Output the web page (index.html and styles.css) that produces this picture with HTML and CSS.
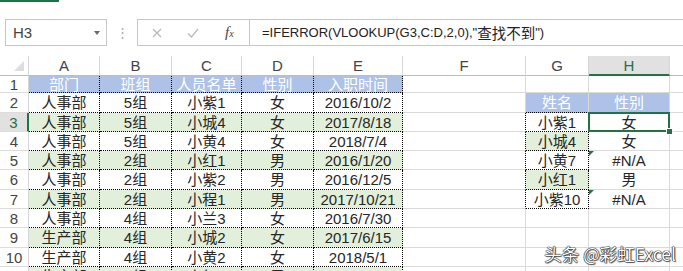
FILE: index.html
```html
<!DOCTYPE html>
<html lang="zh">
<head>
  <meta charset="UTF-8">
  <title>VLOOKUP 查找</title>
  <link rel="stylesheet" href="styles.css">
</head>
<body>
  <div class="app">
    <div class="brand-strip"></div>

    <!-- 名称框 + 编辑栏 -->
    <div class="formula-row">
      <div class="name-box">H3<span class="caret"></span></div>
      <div class="grip">⋮</div>
      <div class="fx-box">
        <div class="fx-btns">
          <svg class="ico-x" width="10" height="10" viewBox="0 0 10 10"><path d="M1 1L9 9M9 1L1 9" stroke="#b9b9b9" stroke-width="1.2" fill="none"/></svg>
          <svg class="ico-ok" width="12" height="10" viewBox="0 0 12 10"><path d="M1 5.5L4.5 9L11 1" stroke="#b9b9b9" stroke-width="1.2" fill="none"/></svg>
          <span class="ico-fx">f<small>x</small></span>
        </div>
        <div class="fx-text">=IFERROR(VLOOKUP(G3,C:D,2,0),"<span class="cjk">查找不到</span>")</div>
      </div>
    </div>

    <!-- 工作表 -->
    <div class="sheet">
      <div class="corner"></div>
      <div class="hd">A</div><div class="hd">B</div><div class="hd">C</div><div class="hd">D</div><div class="hd">E</div><div class="hd">F</div><div class="hd">G</div><div class="hd sel">H</div><div class="hd"></div>

      <div class="rh">1</div>
      <div class="c t th">部门</div><div class="c t th">班组</div><div class="c t th">人员名单</div><div class="c t th">性别</div><div class="c t th">入职时间</div>
      <div class="c"></div><div class="c"></div><div class="c"></div><div class="c"></div>

      <div class="rh">2</div>
      <div class="c t">人事部</div><div class="c t">5组</div><div class="c t">小紫1</div><div class="c t">女</div><div class="c t">2016/10/2</div>
      <div class="c"></div><div class="c th db">姓名</div><div class="c th">性别</div><div class="c"></div>

      <div class="rh sel">3</div>
      <div class="c t g">人事部</div><div class="c t g">5组</div><div class="c t g">小城4</div><div class="c t g">女</div><div class="c t g">2017/8/18</div>
      <div class="c dr"></div><div class="c t">小紫1</div><div class="c cur">女</div><div class="c"></div>

      <div class="rh">4</div>
      <div class="c t">人事部</div><div class="c t">5组</div><div class="c t">小黄4</div><div class="c t">女</div><div class="c t">2018/7/4</div>
      <div class="c dr"></div><div class="c t g">小城4</div><div class="c">女</div><div class="c"></div>

      <div class="rh">5</div>
      <div class="c t g">人事部</div><div class="c t g">2组</div><div class="c t g">小红1</div><div class="c t g">男</div><div class="c t g">2016/1/20</div>
      <div class="c dr"></div><div class="c t">小黄7</div><div class="c err">#N/A</div><div class="c"></div>

      <div class="rh">6</div>
      <div class="c t">人事部</div><div class="c t">2组</div><div class="c t">小紫2</div><div class="c t">男</div><div class="c t">2016/12/5</div>
      <div class="c dr"></div><div class="c t g">小红1</div><div class="c">男</div><div class="c"></div>

      <div class="rh">7</div>
      <div class="c t g">人事部</div><div class="c t g">2组</div><div class="c t g">小程1</div><div class="c t g">男</div><div class="c t g">2017/10/21</div>
      <div class="c dr"></div><div class="c t">小紫10</div><div class="c err">#N/A</div><div class="c"></div>

      <div class="rh">8</div>
      <div class="c t">人事部</div><div class="c t">4组</div><div class="c t">小兰3</div><div class="c t">女</div><div class="c t">2016/7/30</div>
      <div class="c"></div><div class="c"></div><div class="c"></div><div class="c"></div>

      <div class="rh">9</div>
      <div class="c t g">生产部</div><div class="c t g">4组</div><div class="c t g">小城2</div><div class="c t g">女</div><div class="c t g">2017/6/15</div>
      <div class="c"></div><div class="c"></div><div class="c"></div><div class="c"></div>

      <div class="rh">10</div>
      <div class="c t">生产部</div><div class="c t">4组</div><div class="c t">小黄2</div><div class="c t">女</div><div class="c t">2018/5/1</div>
      <div class="c"></div><div class="c"></div><div class="c"></div><div class="c"></div>

      <div class="rh">11</div>
      <div class="c t g">生产部</div><div class="c t g">4组</div><div class="c t g">小红3</div><div class="c t g">男</div><div class="c t g">2017/3/12</div>
      <div class="c"></div><div class="c"></div><div class="c"></div><div class="c"></div>
    </div>

    <div class="watermark">头条 @彩虹Excel</div>
  </div>
</body>
</html>
```

FILE: styles.css
```css
body {
  margin: 0;
  background: #fff;
  font-family: "Liberation Sans", "Noto Sans CJK SC", sans-serif;
  color: #262626;
}
.app {
  position: relative;
  width: 683px;
  height: 271px;
  overflow: hidden;
}
.brand-strip {
  width: 59px;
  height: 2px;
  background: #217346;
}

/* 编辑栏 */
.formula-row {
  display: flex;
  height: 27px;
  margin: 17px 0 10px 5px;
}
.name-box {
  box-sizing: border-box;
  width: 102px;
  border: 1px solid #c6c6c6;
  display: flex;
  align-items: center;
  justify-content: space-between;
  padding: 0 6px 0 7px;
  font-size: 15px;
  color: #444;
}
.caret {
  width: 0;
  height: 0;
  border-left: 3px solid transparent;
  border-right: 3px solid transparent;
  border-top: 4px solid #6a6a6a;
}
.grip {
  width: 30px;
  text-align: center;
  color: #a8a8a8;
  font-size: 13px;
  line-height: 27px;
}
.fx-box {
  flex: 1;
  display: flex;
  margin-right: -2px;
}
.fx-btns {
  box-sizing: border-box;
  width: 113px;
  border: 1px solid #c6c6c6;
  display: flex;
  align-items: center;
  padding-left: 14px;
}
.ico-ok {
  margin-left: 25px;
}
.ico-fx {
  margin-left: 26px;
  font-family: "Liberation Serif", serif;
  font-style: italic;
  font-size: 15px;
  color: #444;
}
.ico-fx small {
  font-size: 10px;
}
.fx-text {
  box-sizing: border-box;
  flex: 1;
  border: 1px solid #c6c6c6;
  border-left: none;
  display: flex;
  align-items: center;
  padding-left: 12px;
  font-size: 13px;
  color: #222;
  white-space: nowrap;
}
.fx-text .cjk {
  font-family: "Noto Sans CJK SC", sans-serif;
  font-size: 14.5px;
}

/* 表格 */
.sheet {
  display: grid;
  grid-template-columns: 29px 71px 72px 70px 72px 89px 123px 63px 81px 80px;
  grid-template-rows: 20px 17px 20px 19px 19px 19px 20px 19px 19px 20px 19px 19px;
  font-size: 15px;
}
.sheet > div {
  box-sizing: border-box;
  display: flex;
  align-items: center;
  justify-content: center;
  line-height: 1;
  white-space: nowrap;
  overflow: hidden;
}
.corner {
  position: relative;
  border-right: 1px solid #d6d6d6;
  border-bottom: 1px solid #bdbdbd;
}
.corner::after {
  content: "";
  position: absolute;
  right: 4px;
  bottom: 4px;
  border-left: 10px solid transparent;
  border-bottom: 10px solid #dedede;
}
.hd {
  color: #444;
  border-right: 1px solid #d6d6d6;
  border-bottom: 1px solid #bdbdbd;
}
.hd.sel {
  background: #e1e1e1;
  color: #217346;
  border-bottom: 2px solid #217346;
}
.rh {
  color: #444;
  border-right: 1px solid #d6d6d6;
  border-bottom: 1px solid #dcdcdc;
}
.rh.sel {
  background: #e1e1e1;
  color: #217346;
  border-right: 2px solid #217346;
}
.c {
  border-right: 1px solid #dadada;
  border-bottom: 1px solid #dadada;
}
.c.t {
  border-right: 1px dotted #000;
  border-bottom: 1px dotted #000;
}
.c.dr {
  border-right: 1px dotted #000;
}
.c.db {
  border-bottom: 1px dotted #000;
}
.th {
  background: #adc2e6;
  color: #fff;
}
.g {
  background: #e2efda;
}
.err {
  position: relative;
}
.err::before {
  content: "";
  position: absolute;
  top: 0;
  left: 0;
  border-top: 5px solid #1f7a3c;
  border-right: 5px solid transparent;
}
.cur {
  position: relative;
  overflow: visible !important;
}
.cur::before {
  content: "";
  position: absolute;
  top: -1px;
  left: -1px;
  right: -1px;
  bottom: -1px;
  border: 2px solid #217346;
}
.cur::after {
  content: "";
  position: absolute;
  right: -4px;
  bottom: -4px;
  width: 5px;
  height: 5px;
  background: #217346;
  border: 1px solid #fff;
}

/* 水印 */
.watermark {
  position: absolute;
  right: 7px;
  bottom: 5px;
  font-family: "Noto Sans CJK SC", sans-serif;
  font-size: 17.5px;
  color: #fff;
  text-shadow: 0 0 1px #111, 0 0 1px #111, 0 0 1px #111, 1px 1px 1px rgba(0, 0, 0, 0.6);
}
```
